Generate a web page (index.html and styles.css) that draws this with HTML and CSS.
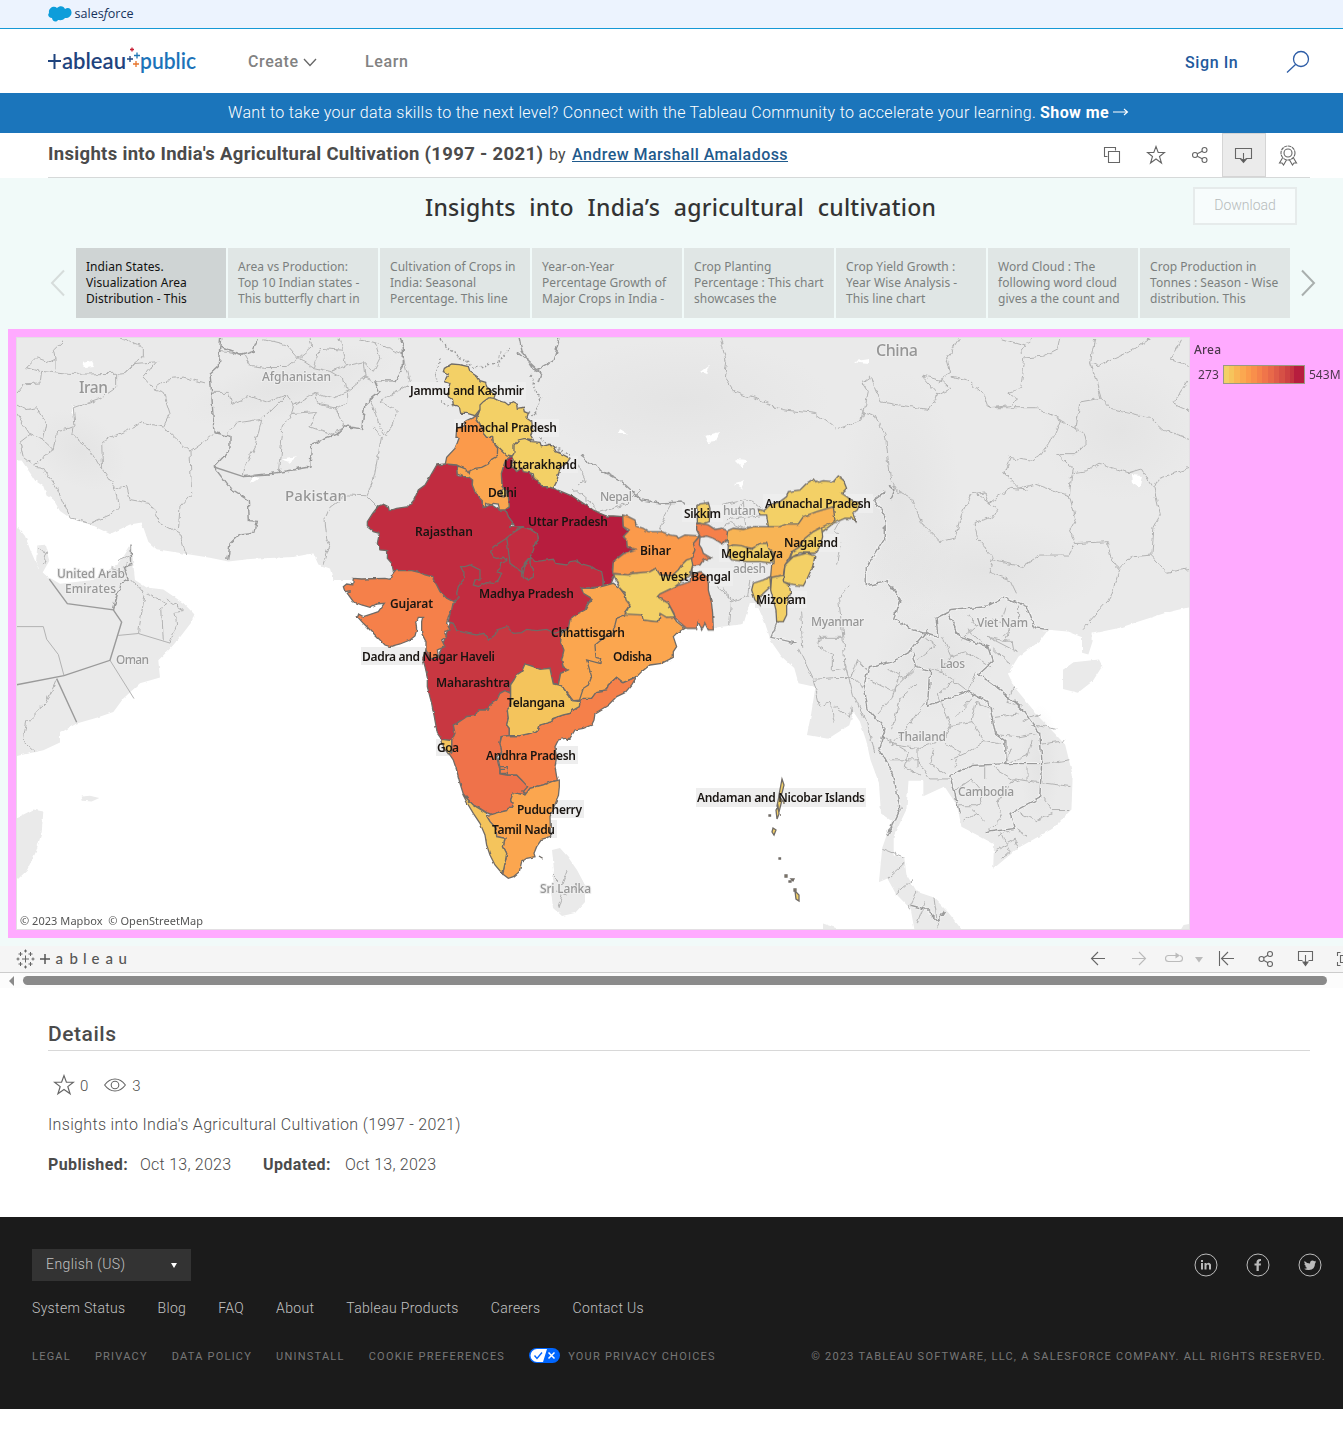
FILE: index.html
```html
<!DOCTYPE html>
<html lang="en">
<head>
<meta charset="utf-8">
<title>Insights into India's Agricultural Cultivation (1997 - 2021)</title>
<link rel="stylesheet" href="styles.css">
</head>
<body>
<div class="topbar">
  <svg width="88" height="20" viewBox="0 0 88 20"><path d="M1 8C0 3 6 0 9 3C12 0 16 1 17 4C21 1 25 5 23 10C21 13 19 13 17 13C15 16 11 15 10 15C8 18 4 16 4 13C1 13-1 10 1 8Z" fill="#0d9dda"/><text x="26.5" y="12.5" class="sf" textLength="59" lengthAdjust="spacingAndGlyphs">sales<tspan font-style="italic">f</tspan>orce</text></svg>
</div>
<header class="header">
  <svg class="logo" width="160" height="34" viewBox="48 44 160 34">
    <path d="M48 61H61M54.5 54V69" stroke="#1f447e" stroke-width="2" fill="none"/>
    <text class="brand navy" x="62" y="69" textLength="64" lengthAdjust="spacingAndGlyphs">ableau</text>
    <text class="brand blue" x="140" y="69" textLength="56" lengthAdjust="spacingAndGlyphs">public</text>
    <path d="M127 59H133M130 56V62" stroke="#1f447e" stroke-width="1.3"/><path d="M130 49.500H134M132 47.500V51.500" stroke="#c72035" stroke-width="1.3"/><path d="M134 55.500H140M137 52.500V58.500" stroke="#1f77b4" stroke-width="1.3"/><path d="M133 64H139M136 61V67" stroke="#e8762c" stroke-width="1.3"/>
  </svg>
  <span class="nav create">Create</span>
  <svg class="chev" width="14" height="9" viewBox="0 0 14 9"><path d="M1 1L7 7.500L13 1" fill="none" stroke="#666" stroke-width="1.3"/></svg>
  <span class="nav learn">Learn</span>
  <span class="signin">Sign In</span>
  <svg class="search" width="24" height="24" viewBox="0 0 24 24"><circle cx="15" cy="9" r="7.500" fill="none" stroke="#2c5ca6" stroke-width="1.3"/><path d="M9.500 14.500L1 22.500" stroke="#2c5ca6" stroke-width="1.3"/></svg>
</header>
<div class="banner"><span>Want to take your data skills to the next level? Connect with the Tableau Community to accelerate your learning.</span><b>Show me</b><svg width="16" height="10" viewBox="0 0 16 10"><path d="M0 5H14.500M11 2L14.500 5L11 8" fill="none" stroke="#fff" stroke-width="1.1"/></svg></div>
<div class="titlebar">
  <h1>Insights into India's Agricultural Cultivation (1997 - 2021)</h1><span class="by">by</span><a class="author">Andrew Marshall Amaladoss</a>
  <div class="actions">
    <span class="act"><svg width="18" height="18" viewBox="0 0 18 18"><path d="M4.500 10.500H1.500V1.500H12.500V4.500M5.500 5.500H16.500V16.500H5.500Z"/></svg></span>
    <span class="act"><svg width="20" height="20" viewBox="0 0 20 20"><path d="M10 1.500L12.200 7.500H18.500L13.500 11.500L15.500 18L10 14L4.500 18L6.500 11.500L1.500 7.500H7.800Z"/></svg></span>
    <span class="act"><svg width="18" height="18" viewBox="0 0 18 18"><circle cx="4" cy="9" r="2.500"/><circle cx="13.500" cy="4" r="2.500"/><circle cx="13.500" cy="14" r="2.500"/><path d="M6.300 7.800L11.200 5.200M6.300 10.200L11.200 12.800"/></svg></span>
    <span class="act on"><svg width="20" height="18" viewBox="0 0 20 18"><path d="M7.500 12.500H1.500V2.500H17.500V12.500H11.500M9.500 7V15"/><path class="solid" d="M7 13.500H12L9.500 16.500Z"/></svg></span>
    <span class="act"><svg width="20" height="22" viewBox="0 0 20 22"><circle cx="10" cy="9" r="4"/><circle cx="10" cy="9" r="7" stroke-dasharray="3.500 .6"/><path d="M4.500 14L1.500 19H4L5.500 21L8.500 16M15.500 14L18.500 19H16L14.500 21L11.500 16"/></svg></span>
  </div>
</div>
<section class="viz">
  <div class="vizhead"><h2>Insights into India’s agricultural cultivation</h2><span class="download">Download</span></div>
  <div class="story">
    <svg class="arrow" width="16" height="28" viewBox="0 0 16 28"><path d="M14 1.500L2 14L14 26.500" fill="none" stroke="#d6dcdb" stroke-width="2"/></svg>
    <div class="tabs">
      <div class="tab sel">Indian States.<br>Visualization Area<br>Distribution - This</div>
      <div class="tab">Area vs Production:<br>Top 10 Indian states -<br>This butterfly chart in</div>
      <div class="tab">Cultivation of Crops in<br>India: Seasonal<br>Percentage. This line</div>
      <div class="tab">Year-on-Year<br>Percentage Growth of<br>Major Crops in India -</div>
      <div class="tab">Crop Planting<br>Percentage : This chart<br>showcases the</div>
      <div class="tab">Crop Yield Growth :<br>Year Wise Analysis -<br>This line chart</div>
      <div class="tab">Word Cloud : The<br>following word cloud<br>gives a the count and</div>
      <div class="tab">Crop Production in<br>Tonnes : Season - Wise<br>distribution. This</div>
    </div>
    <svg class="arrow" width="16" height="28" viewBox="0 0 16 28"><path d="M2 1.500L14 14L2 26.500" fill="none" stroke="#a9afae" stroke-width="2"/></svg>
  </div>
  <div class="dash">
    <svg class="map" width="1174" height="593" viewBox="16 337 1174 593">
      <defs>
        <filter id="rough" x="0" y="0" width="1200" height="950" filterUnits="userSpaceOnUse" color-interpolation-filters="sRGB"><feTurbulence type="fractalNoise" baseFrequency=".14" numOctaves="2" seed="4"/><feDisplacementMap in="SourceGraphic" scale="6" xChannelSelector="R" yChannelSelector="G"/></filter>
        <filter id="fine" x="0" y="0" width="1200" height="950" filterUnits="userSpaceOnUse" color-interpolation-filters="sRGB"><feTurbulence type="fractalNoise" baseFrequency=".2" numOctaves="1" seed="7"/><feDisplacementMap in="SourceGraphic" scale="3" xChannelSelector="R" yChannelSelector="G"/></filter>
        <radialGradient id="relief"><stop offset="0" stop-color="#dedede" stop-opacity=".5"/><stop offset="1" stop-color="#dedede" stop-opacity="0"/></radialGradient>
      </defs>
      <rect x="16" y="337" width="1174" height="593" fill="#fff"/>
      <g filter="url(#fine)">
        <g class="land" transform="translate(10 335) scale(.3333 .3827)">
          <path d="M0 0H1320V640H1130L1030 640L970 640L960 610L925 600L910 570L850 580L720 585L655 592L600 582L530 572L440 560L415 540L395 490L360 495L300 520L240 495L180 478L150 460L130 430L110 420L100 395L75 380L60 360L35 328H0Z"/>
          <path d="M0 490L20 500L45 525L60 560L85 610L110 630L150 650L250 640L320 600L340 580L365 545L370 600L375 640L410 660L460 665L520 700L553 730L545 750L510 790L480 820L445 850L450 895L390 910L340 950L310 985L260 1000L200 1015L150 1040V1065L100 1085L20 1100L0 1105ZM0 1266L20 1262L70 1240L100 1245L95 1300L78 1350L50 1400L20 1425L0 1430ZM215 1206L240 1204L268 1210L245 1219L218 1217ZM82 550L105 548L118 590L95 625L78 595Z"/>
        </g>
        <g class="land" transform="translate(680 335) scale(.4232 .3827)">
          <path d="M-600 0H1215V708L1150 725L1080 750L1040 765L975 780V800L965 835L950 830V790L915 775L870 770L850 800L800 840L775 885L790 920L850 1000L910 1070L928 1150L925 1240L880 1290L800 1340L740 1395L742 1330L700 1305L665 1285L655 1230L625 1180L575 1205V1165L540 1165L535 1240L505 1310V1360L530 1365L535 1410L560 1455L600 1470L635 1510L670 1560H555L545 1500L510 1460L490 1420L470 1430L478 1340L500 1270L475 1250L470 1170L450 1110L440 1060L425 1010L410 985L400 1020L350 1055L300 1045L310 990L320 920L280 910L270 870L240 840L215 800L200 750L180 700L165 700L150 755L80 765L-300 600H-600ZM905 875L930 855L990 848L998 865L975 905L940 935L905 925ZM338 1560V1538L370 1550V1560ZM1180 1560L1190 1542L1210 1538V1560Z"/>
        </g>
        <path class="lnd" d="M552 850L560 848L568 857L577 870L585 885V902L575 913L562 916L553 908L551 890L554 870Z"/>
      </g>
      <g fill="url(#relief)"><ellipse cx="80" cy="450" rx="50" ry="35" transform="rotate(35 80 450)"/><ellipse cx="290" cy="385" rx="110" ry="30" transform="rotate(-15 290 385)"/><ellipse cx="680" cy="400" rx="150" ry="60"/><ellipse cx="900" cy="500" rx="60" ry="130"/><ellipse cx="1120" cy="430" rx="80" ry="70"/><ellipse cx="985" cy="570" rx="120" ry="50"/><ellipse cx="935" cy="660" rx="60" ry="60"/><ellipse cx="1040" cy="765" rx="20" ry="60"/></g>
      <g fill="#fff" filter="url(#rough)"><path d="M82 363L92 361L95 367L85 368ZM253 475L258 478L250 483ZM281 460L298 457L290 463ZM705 436L719 432L715 441L708 442ZM734 459L748 460L742 467ZM855 361L869 359V364L858 363ZM1132 475L1142 476L1140 487L1133 483ZM701 372L709 366L706 374ZM620 429L628 434L618 434ZM71 410L74 405L73 416ZM734 484L745 481L741 488Z"/></g>
      <g filter="url(#rough)" fill="none">
        <g class="minor" transform="translate(10 335) scale(.3333 .3827)">
          <path d="M20 150L40 130L90 128L95 95L180 103L320 100L345 98L400 55V30L330 8M90 95L50 85L80 60L110 70L135 60L130 40L160 15M135 60V90M320 100V135L270 165L190 190L195 240L140 250L130 300L100 320L70 340L40 320L30 280L60 260L100 275L130 300M20 180L50 195L80 190L110 230L100 275M20 205L60 260M345 98L370 75L440 70L400 110L430 140L460 150L480 205L460 240L395 228L350 250L275 280L278 355L240 300L185 260L190 240M278 355L315 400L325 450L300 470L240 492L180 478L140 400L100 350L70 345M315 400L350 395L360 430L420 440L450 490L510 520L527 572M430 140L470 115L520 110L585 125M460 240L540 303L545 415L510 450L505 510M540 303L610 260"/>
          <path d="M600 150L655 150L665 180L720 160L770 175L830 155L850 185L845 205L820 235L805 360M655 260L680 230L755 220L830 155M755 220L735 290L705 340L700 370M845 205L920 200L900 240L965 260L1005 240L975 190L920 180L915 150L850 185M630 40L700 50L720 80L770 85L830 85L865 60L830 25L760 10M865 60L910 85L960 95L1000 115L1010 150L970 165L915 150M865 60L905 30L900 8M910 85L930 35L1000 40L990 10M1000 40L1010 80L960 95M1010 80L1060 70L1090 95L1110 60L1095 20L1180 50M1060 70L1065 110L1010 150L1010 180L975 190M1065 110L1090 120M1095 20L1050 10M1180 60L1200 130L1110 170L1165 200L1130 265L1110 240L1090 190L1080 170M1090 240L1115 265L1090 380L1070 420L1010 418L960 450L945 480L950 530L960 550L940 600M1070 420L1105 450"/>
          <path d="M140 900L110 960L50 1010L40 1060L75 1088M385 780L400 700L405 680L365 640M460 800L455 710L470 700L410 675M480 805L500 755L495 725L520 720L470 690M300 605L340 625L350 590M325 590L365 575M85 560L110 570L100 600"/>
        </g>
        <g class="major" transform="translate(10 335) scale(.3333 .3827)"><path d="M632 8L625 80L600 100L605 150L612 255L660 265L660 300L612 345M700 370L800 360L900 345L905 285L980 260L1005 240L1055 245L1065 180L1110 150L1095 120L1155 120L1180 85V30L1170 8M632 30L695 50L730 40L745 8M612 345L660 400L715 430L718 485L742 487L735 515L690 520L660 545L653 590M310 718L330 650L355 640L340 605L365 600L363 545"/></g>
        <g class="minor" transform="translate(680 335) scale(.4232 .3827)">
          <path d="M95 8L110 70L105 110L130 150L190 170L240 195L320 205L370 245L430 225L445 150L430 125L450 110L475 175L530 185L590 195L610 155L570 105L620 120L640 140L605 160M660 8L630 60L640 100L610 120M640 110L680 120L720 160L730 190L780 185L800 170L775 150L805 140L815 60L860 55L895 35L900 8M730 190L840 190L900 220L885 260L850 315L830 330L780 320L765 360L800 400L840 390L920 420L925 370L930 350L890 310L935 310L960 280L955 255L885 215M430 200L460 210L485 260L498 380L515 410L550 430L570 490L615 540L650 530L665 470L690 415L720 410L730 440L780 400L820 405M700 415L750 455L740 475L695 490L700 530L740 580L730 620L780 640L795 675M740 590L810 605L850 575L920 575L935 545L920 510L935 480L920 420M935 545L1010 540L1020 590L1040 610L1015 690L950 770M1040 610L1065 580L1115 575L1120 500L1135 470L1120 400L1090 350L1060 360L990 335L960 355L930 360M1115 575L1150 620L1205 610M1120 400L1130 375L1205 348M820 30L760 10M805 45L830 8M935 250L945 175L995 165L970 70L990 80L1060 45L1110 8M995 165L1020 195L1110 215L1145 250L1205 270M970 70L980 8M1205 200L1165 180L1200 120M1205 80L1160 65L1185 10M460 430L440 440M370 600L380 540L365 510L375 490"/>
          <path d="M290 820L285 720M280 820L315 900L365 895L405 895L430 920M325 790L385 790L390 870L360 875V835L325 815L330 785M385 790L375 690L400 655M315 900L330 970L355 960L365 1015M365 970L400 1000L405 970M405 895L420 850L445 880M390 860L410 940L440 1010L460 1090M100 660L120 690L115 755M115 700L160 680L165 640M90 660L120 690M100 505L120 490L150 505L180 500M110 480L190 470M125 465L150 440L155 500M100 445L160 430L195 455"/>
          <path d="M580 790L605 810L560 850M620 790L640 840L615 880M640 840L680 830L735 870M660 800L700 760L680 730M700 760L740 745L780 760L770 800L730 790M770 710L760 750M800 710L800 750L760 790M730 790L800 830M760 800L785 800L790 830M740 820L780 860M680 770L720 810M590 870L620 880L680 930M650 900L610 940M700 880L680 930M560 860L530 900L490 870M445 900L500 930L560 870M520 880L500 950L460 1000M560 910L520 950L500 1030M585 950L540 1020L500 1070M610 940L640 1020L620 1060L560 1080L500 1070M640 1020L690 1010L700 960L740 980M690 950L650 1000M690 1010L720 1060L680 1090L640 1110M620 1060L660 1090L650 1130M720 1060L760 1070M740 1000L800 990M755 1045L800 1050L850 1040M780 1080L770 1120L820 1100L830 1060M480 1050L540 1090L530 1130L570 1150M500 1110L560 1110L590 1160L640 1160M560 1080V1130M600 1080L590 1120L630 1150"/>
          <path d="M790 920L770 960L810 970M810 1010L850 990M840 1020L890 1030M850 1070L910 1060M860 1120L920 1110M855 1170L925 1180M860 1210L880 1240L920 1240M790 1240L840 1270L880 1250M720 1300L760 1260L750 1220L790 1160L850 1170M650 1190L690 1160L720 1200L700 1230L660 1230M720 1120V1160M740 1130L800 1170M750 1310L790 1290L820 1310M740 1350L790 1320L800 1340M760 1300L780 1350L760 1370M690 1240L720 1270M670 1270L700 1250M820 1130V1165M475 1340L530 1365M490 1420L530 1380M510 1460L550 1420M560 1455L540 1500M580 1480L560 1540M600 1470L610 1550"/>
        </g>
        <g class="halo" transform="translate(680 335) scale(.4232 .3827)"><path id="sea" d="M485 410L460 430L485 480V530L440 610L440 655L490 645L520 690L505 740L550 770L610 790L605 740L640 720L720 710L765 685L820 710L840 765L870 770M585 770L540 830L500 855L445 870L435 920L445 980L485 1030L470 1080L505 1150L520 1240L490 1310M635 730L660 790L730 815L740 850L705 885L760 930L810 980L850 1040L855 1110L850 1210L780 1250L790 1290L720 1300M550 830L560 870L590 875L585 970L680 930L730 960L745 1040L770 1060V1120L850 1120M770 1120L690 1125L640 1150L660 1250M545 1490L580 1500L610 1530L625 1505M230 750L215 790L275 805"/></g>
        <g class="major" transform="translate(680 335) scale(.4232 .3827)"><use href="#sea"/></g>
        <g class="minor"><path d="M497 368L500 351M552 875L562 885L568 870M555 890L567 895L577 885M562 895L558 908M640 490L625 505L600 512M672 500L660 530M705 500L710 520M575 460L585 480L578 485M600 512L572 487"/></g>
        <g class="major"><path d="M517 351L541 373L538 382M519 337L522 351L535 371L553 361L560 337M580 455L600 470L620 480L642 500L660 503L683 502L692 512M888 484L895 490L890 500"/><path stroke-dasharray="2 2" d="M440 338L450 350L475 368L500 362L510 347M440 358L436 375L440 400L455 408M530 375L540 400L535 415L527 412M533 430L547 445L570 455"/></g>
      </g>
      <g fill="none" transform="translate(10 335) scale(.3333 .3827)">
        <g class="minor"><path d="M20 762L100 762L110 795L145 835L162 890M300 850L372 950M325 785L385 780L480 805"/></g>
        <g class="major"><path d="M612 345L700 370L780 366M118 638L172 702L310 718L335 750L300 850L162 890L20 914M140 898L200 1012"/></g>
      </g>
      <g class="place">
        <text x="79" y="393" font-size="15.500" textLength="29">Iran</text><text x="262" y="381" textLength="69">Afghanistan</text><text x="285" y="501" font-size="15" textLength="62">Pakistan</text><text x="57" y="578" textLength="68">United Arab</text><text x="65" y="593" textLength="51">Emirates</text><text x="116" y="664" textLength="33">Oman</text><text x="876" y="356" font-size="16" textLength="42">China</text><text x="600" y="501" textLength="32">Nepal</text><text x="723" y="515" textLength="33">hutan</text><text x="733" y="573" textLength="33">adesh</text><text x="811" y="626" textLength="53">Myanmar</text><text x="977" y="627" textLength="51">Viet Nam</text><text x="940" y="668" textLength="25">Laos</text><text x="898" y="741" textLength="48">Thailand</text><text x="958" y="796" textLength="56">Cambodia</text><text x="540" y="893" textLength="51">Sri Lanka</text>
      </g>
      <path class="box" d="M409 382H526V400H409ZM454 419H559V437H454ZM503 456H578V473H503ZM361 647H497V665H361ZM436 739H462V756H436ZM485 746H578V764H485ZM516 800H584V818H516ZM491 820H557V838H491ZM659 568H733V586H659ZM682 505H723V522H682ZM763 494H873V513H763ZM782 534H840V552H782ZM719 545H785V562H719ZM755 591H807V608H755ZM696 788H866V807H696Z"/>
      <g class="states" filter="url(#fine)">
        <g transform="translate(340 570) scale(.3333)">
          <path fill="#c83741" d="M258 240L295 262L330 160L360 100H660L665 190L662 215L672 240L665 270L670 290L685 300L662 310L655 340L640 342L635 320L630 295L600 298L580 290L555 282L545 305L530 315L522 330L510 345L512 368L495 362L480 370L470 390L450 405L445 420L415 420L405 437L380 440L350 460L340 465L345 490L335 512L305 508L292 490L283 440L275 400L262 350V320L255 290L248 265Z"/>
        </g>
        <g transform="translate(340 350) scale(.3333)">
          <path fill="#c22c40" d="M505 535L545 530L592 552L785 600L790 710L725 715L730 728L755 745L740 765L735 785L715 800L690 820L685 835L645 850L620 838L590 842L560 838L545 848L520 850L500 830L470 840L465 855L445 870L432 850L410 855L385 850L350 842L340 820L325 815L335 770L345 755L340 700L360 600Z"/>
          <path fill="#b71d3e" d="M512 320L497 330L484 370L486 410L505 440L508 470L497 480L505 500L520 520L525 533L545 530L570 538L592 552L595 565L585 580L578 600L560 618L553 640L545 655L550 680L565 690L580 680V655L570 640V620L585 635L605 632L640 628L648 640L680 645L690 635L710 632L720 640L755 650L770 660L785 665L790 690V705H812L825 670L817 660L820 635L850 610L885 598L862 590L860 570L850 560L865 545L850 530L848 500L820 498H800L780 490L760 480L730 460L700 440L665 425L640 415L605 405L550 350Z"/>
          <path fill="#c22c40" d="M505 532L525 533L545 530L570 538L592 552L595 565L585 580L578 610L553 640V655L550 670L510 640L500 560L505 535ZM558 640L545 655L550 680L565 690L580 680V655L570 640V620Z"/>
          <path fill="#c12c40" d="M290 345L316 342L350 345L352 378L370 380L385 378L397 390V405L405 425L415 440L427 452V472L437 470L455 465L478 480L497 478L505 500L520 520L508 532L548 530L520 548L495 568L460 590L452 605L460 622L470 625L490 622L500 632L482 638L480 655L470 665L485 670L475 690L460 700L440 698L415 710L400 705L405 690L420 690V660L400 650L390 645L375 650L362 650L372 670L370 690L355 710L350 730L355 745L340 755L320 745L300 725L285 700L275 680L255 675L240 668L215 662H160L155 640L142 625L143 602L120 600L112 580L118 550L100 545L82 530V515L98 490L115 468L130 463L145 470L148 483L170 475L205 470L222 450L235 420L255 405L270 380Z"/>
          <path fill="#fba64f" d="M473 290L490 300L512 320L497 330L490 350L484 370L486 410L500 420L505 440L508 470L495 480H478L475 462L460 460L455 465L437 460V472L427 470V452L415 440L405 425L397 405L398 390L385 380H370L352 372L350 350L390 350Z"/>
          <path fill="#f3d066" d="M480 422L492 416L500 425L497 438L484 437Z"/>
          <path fill="#fb9a4b" d="M417 188L412 197L410 208L428 235L430 250L440 262H458L465 285L473 295L472 318L455 328L445 342L425 352L405 355L390 362L388 370L380 358L365 352L350 345L316 342L320 322L345 295L352 278L358 262H348L350 235L372 228L378 212L405 200Z"/>
          <path fill="#f3d066" d="M447 143L462 145L475 152L495 157L505 165L520 155L530 160L532 175L550 172L553 185L565 190L560 205L575 215L578 240L572 255L580 270L555 265L535 270L522 285V310L517 318L500 315L485 300L475 290L460 275L458 262H440L430 250L428 235L410 205L420 180V165L430 155ZM313 55L335 42L358 44L385 50L390 65L412 80L420 92L437 97L440 110L452 120L465 135L462 145L447 143L430 155L420 165V178L405 197L382 190H362L358 170L340 165L338 150L325 140L322 128L330 100L315 95L318 85L325 72L310 65ZM522 285L535 270L555 265L575 275L600 277L605 290L630 283L640 290L648 305L665 312L690 325L680 340L660 355L655 375L650 395L640 415L625 410H605L600 400L582 385L580 372L568 368L550 365L545 355L530 365L515 345L520 330L515 320L522 310Z"/>
        </g>
        <g transform="translate(340 570) scale(.3333)">
          <path fill="#f5804a" d="M40 25L65 27L135 25L150 28L155 15L165 2H215L240 8L255 15L275 20L290 45L300 65L320 85L340 95L335 120L325 140L320 160L330 180L312 185L320 200L305 210L315 230L292 240L295 262L270 262L258 240V215L245 190V155L248 142H235L228 160L230 180L225 198L210 210L180 222L150 230L135 225L100 190L70 160L52 140L55 132L70 140L100 130L115 125L133 100L110 102L90 112L65 105L40 95L22 70L32 62L15 65L10 50L20 42L38 45Z"/>
          <path fill="#fba64f" d="M725 55H760L790 48L820 40L840 55L855 75L870 105L855 125L905 133L910 150L955 155L960 130L1000 140L1010 155L1035 175L1010 190L1000 200L1010 230L1000 245V262L965 280L930 285L905 305L890 320L850 338L830 322L805 345L800 360L770 365L755 385L730 390L700 392L690 380L670 355L655 345L662 310L685 300L670 290L665 270L672 240L662 215L665 190L685 175L690 150L715 130L735 120L755 85L730 70Z"/>
          <path fill="none" d="M855 135L830 145L825 165L815 195L790 205L765 225L768 262L782 265L780 280L740 270L755 320L745 345L730 355L718 392"/>
          <path fill="#ef724a" d="M340 465L350 460L380 440L405 437L415 420H445L450 405L470 390L480 370L495 362L512 370L510 410L502 420L505 445L500 465L508 475V497L483 500L480 520L488 545L470 560L478 595L510 590L500 615H530L545 630L560 640L563 655L550 665L555 675L520 668L512 690L520 712H505L500 722L475 728L460 735L440 728L420 715L400 705L385 690L370 672L360 640L350 600L340 570L325 548L335 545V512L345 490Z"/>
          <path fill="#f5804a" d="M485 500L508 497H540L570 490L595 480L600 465L635 455L640 445L670 435L690 430L700 420L718 410L720 395L730 385H755L770 365L800 360L805 345L830 322L850 338L890 320L875 345L855 368L830 380L805 405L765 430L762 450L755 465L730 475L705 480L690 505H675L655 510L645 530L650 560L645 590L652 632L635 635L610 645L570 655L560 672L550 665L563 650L545 630L530 615H500L480 612V592L475 570L485 545L480 520Z"/>
          <path fill="none" d="M478 590H502V610H480V598H495"/>
          <path fill="#f4c45c" d="M555 282L580 290L600 298L630 295L635 320L640 342L655 345L670 355L690 380L695 392L720 395L718 410L700 420L690 430L670 435L640 445L635 455L600 465L595 480L570 490L540 497H508V475L500 465L505 445L502 420L512 405V345L522 330L530 315L545 305ZM305 508L335 512V545L325 552L312 535Z"/>
          <path fill="#fba64f" d="M440 738L475 728L500 722L505 712H520L512 690L520 668L555 675L570 655L610 645L635 635L658 630V650L655 680L640 715L630 740L632 800L605 808L590 830L582 850L585 860L560 865L545 875L538 905L520 920L505 925L488 912L495 880L500 850L490 830L495 805L470 800L468 775L450 755Z"/>
          <path fill="#f4c45c" d="M368 672L385 690L400 705L440 730V738L450 755L468 775L470 800L495 805L490 830L500 850L495 880L488 912L465 885L450 855L440 825L435 795L420 760L400 730L385 705Z"/>
          <path d="M597 858L608 865M680 508H692"/>
        </g>
        <g transform="translate(600 450) scale(.3333)">
          <path fill="#fb9a4b" d="M68 195L85 200L105 210L108 228L130 235L145 245H185L210 255L230 258L235 265L255 255L298 258L285 275L288 295L280 310L272 330H260L245 345L235 360L215 378L180 375L168 355L150 365L120 375L100 370L85 375L38 370L40 335L70 312L105 298L82 292L80 270L70 260L88 240L70 230Z"/>
          <path fill="#f5804a" d="M290 220L310 222L325 225L345 238L365 235L383 242L382 265L368 282L340 265L320 258L300 262L298 285L305 295L310 310L335 325L310 330L300 345L275 350L278 375L300 365L320 380L325 400V420L335 460L338 490L340 540H325L315 520L305 540L295 515L290 535H260L225 505L222 490L205 460L172 440L180 430L225 410L270 395L278 345L272 330L285 300L280 280L300 258L290 240Z"/>
          <path fill="#f3d066" d="M40 372L85 375L100 370L150 365L168 355L180 375L215 378L235 360L245 345L260 330L275 325L278 345L270 375L245 395L225 410L180 432L172 440L205 460L225 500L200 502L180 490L178 510L170 515L130 510L125 495L75 492L90 465L78 450L75 430L60 415ZM290 170L300 162L325 158L330 175L328 215L310 222L292 218V195ZM475 178L492 182L510 165L540 155L560 140L565 125L600 120L620 100L640 87L650 98L670 92L700 95L715 78L730 90L740 115L725 130L740 140L760 155L780 160L772 180L758 190L770 217L755 205H735L700 220L668 245L640 250L505 230L500 195L480 195Z"/>
          <path fill="#f8b455" d="M383 242L400 235L430 238L460 230H505L540 230L560 222H595L610 200L650 185L700 170L705 212L665 232L640 250L620 262L600 290L575 305L570 320L555 345L550 375L530 390L512 380L515 345L522 335L508 315L490 285L455 295L400 285L385 290L380 265Z"/>
          <path fill="#f3d066" d="M385 292L400 285L425 287L455 298L480 280H500L505 295L522 310V340L480 335H440L395 330L382 315ZM665 232L668 260L660 290L645 310L600 308L570 325L578 305L600 290L615 265L640 245ZM580 320L620 310L645 318L638 350L622 385L610 408L570 402L550 395L555 345ZM515 382L550 375V395L568 405L572 430L560 460V495L550 515H530L528 480L520 450L512 420ZM510 380L512 410L490 430L475 445L480 465L465 450L455 420L460 400L490 390Z"/>
        </g>
      </g>
      <g class="states"><path fill="#f3d066" d="M782 779L784 785L782 793L779 795ZM779 796L782 800L779 812L777 806ZM778 806L779 814L777 819L776 810ZM773 828L776 830L774 835L772 832ZM795 891L799 895L799 901L796 899ZM779 858H780.500V859H779ZM785 875H787V877H785ZM791 879H794L793 881ZM789 881H791V882H789ZM794 889H796V891H794ZM782 801H784V804M780 815H781M769 815H770.500V816H769Z"/></g>
      <g class="lab">
        <text x="410" y="395" textLength="114">Jammu and Kashmir</text><text x="455" y="432" textLength="102">Himachal Pradesh</text><text x="504" y="469" textLength="73">Uttarakhand</text><text x="488" y="497" textLength="29">Delhi</text><text x="415" y="536" textLength="58">Rajasthan</text><text x="528" y="526" textLength="80">Uttar Pradesh</text><text x="479" y="598" textLength="95">Madhya Pradesh</text><text x="390" y="608" textLength="43">Gujarat</text><text x="362" y="661" textLength="133">Dadra and Nagar Haveli</text><text x="436" y="687" textLength="74">Maharashtra</text><text x="507" y="707" textLength="58">Telangana</text><text x="437" y="752" textLength="22">Goa</text><text x="486" y="760" textLength="90">Andhra Pradesh</text><text x="517" y="814" textLength="65">Puducherry</text><text x="492" y="834" textLength="63">Tamil Nadu</text><text x="551" y="637" textLength="74">Chhattisgarh</text><text x="613" y="661" textLength="39">Odisha</text><text x="640" y="555" textLength="31">Bihar</text><text x="660" y="581" textLength="71">West Bengal</text><text x="684" y="518" textLength="37">Sikkim</text><text x="765" y="508" textLength="106">Arunachal Pradesh</text><text x="721" y="558" textLength="62">Meghalaya</text><text x="784" y="547" textLength="54">Nagaland</text><text x="756" y="604" textLength="50">Mizoram</text><text x="697" y="802" textLength="168">Andaman and Nicobar Islands</text>
      </g>
      <text class="credit" x="20" y="925" textLength="183">© 2023 Mapbox&#160; © OpenStreetMap</text>
      <rect x="16.500" y="337.500" width="1173" height="592" fill="none" stroke="#e3dfe3"/>
    </svg>
    <aside class="legend"><div class="lt">Area</div><div class="lr"><span>273</span><i class="ramp"></i><span class="max">543M</span></div></aside>
  </div>
  <div class="toolbar">
    <svg width="116" height="22" viewBox="0 -1 116 22"><path d="M6 10H13M9.500 6.500V13.500M8 2H11M9.500 .5V3.500M8 18H11M9.500 16.500V19.500M.5 10H3.500M2 8.500V11.500M15.500 10H18.500M17 8.500V11.500M2.500 5H6.500M4.500 3V7M12.500 5H16.500M14.500 3V7M2.500 15H6.500M4.500 13V17M12.500 15H16.500M14.500 13V17" fill="none" stroke="#666"/><path d="M24 10H34M29 5V15" fill="none" stroke="#555" stroke-width="1.500"/><text class="tword" x="39.500 53.500 67 75.500 89.500 102.500" y="15">ableau</text></svg>
    <svg class="tools" width="253" height="20" viewBox="1090 949 253 20">
      <path d="M1105 958.500H1092M1098 952L1091.500 958.500L1098 965"/><path class="dim" d="M1132 958.500H1145M1139 952L1145.500 958.500L1139 965M1177 955.500H1168.500Q1165.500 955.500 1165.500 958.500Q1165.500 961.500 1168.500 961.500H1179.500Q1182.500 961.500 1182.500 958.500Q1182.500 956 1180 955.500"/><path d="M1175.500 952.500V958.500L1180 955.500ZM1195 957H1203L1199 962.500Z" class="dimfill"/><path d="M1219.500 951V966M1234 958.500H1221.500M1228 952L1221.500 958.500L1228 965"/><circle cx="1261.500" cy="959" r="2.500"/><circle cx="1270" cy="954" r="2.500"/><circle cx="1270" cy="964" r="2.500"/><path d="M1264 957.500L1268 955.300M1264 960.500L1268 962.700M1302.500 960.500H1298.500V951.500H1312.500V960.500H1308.500M1305.500 955V963M1340.500 952.500H1337.500V956M1337.500 962V965.500H1340.500M1344 955.500H1340.500V962.500H1344"/><path class="solid" d="M1303 962H1308L1305.500 965.500Z"/>
    </svg>
  </div>
  <div class="scroll"><i class="tri"></i><i class="thumb"></i></div>
</section>
<section class="details">
  <h3>Details</h3>
  <div class="stats"><svg width="22" height="22" viewBox="0 0 20 20"><path d="M10 1.500L12.200 7.500H18.500L13.500 11.500L15.500 18L10 14L4.500 18L6.500 11.500L1.500 7.500H7.800Z"/></svg><span>0</span><svg class="eye" width="22" height="14" viewBox="0 0 22 14"><path d="M.6 7Q5 1 11 1T21.400 7Q17 13 11 13T.6 7Z"/><circle cx="11" cy="7" r="3.800"/></svg><span>3</span></div>
  <p class="desc">Insights into India's Agricultural Cultivation (1997 - 2021)</p>
  <p class="dates"><b>Published:</b><span>Oct 13, 2023</span><b class="upd">Updated:</b><span>Oct 13, 2023</span></p>
</section>
<footer class="footer">
  <div class="frow"><div class="lang"><span>English (US)</span><i></i></div>
    <div class="social">
      <svg width="24" height="24" viewBox="0 0 24 24"><circle cx="12" cy="12" r="11"/><path class="g" d="M7 10H9V16.500H7ZM7 7H9V9H7ZM10.500 10H12.500V11Q15 8.500 17 11.500V16.500H15V12.500Q13.800 10.500 12.500 12.500V16.500H10.500Z"/></svg>
      <svg width="24" height="24" viewBox="0 0 24 24"><circle cx="12" cy="12" r="11"/><path class="g" d="M10.500 18V12.500H8.500V10.500H10.500Q10 5.500 15 6V8Q12.500 7.500 12.800 10.500H15L14.700 12.500H12.800V18Z"/></svg>
      <svg width="24" height="24" viewBox="0 0 24 24"><circle cx="12" cy="12" r="11"/><path class="g" d="M6.500 8Q9 10.500 12 10.500Q12 7.500 14.500 7.500Q15.500 7.500 16.300 8.200L18 7.800L17.200 9.300L18 9.500L17 10.500Q17 16.500 11 17Q8 17.200 6 15.800Q8 16 9.200 15Q7.500 14.500 7.200 13.300L8.200 13.200Q6.300 12.300 6.300 10.800L7.200 11Q5.800 9.500 6.500 8Z"/></svg>
    </div>
  </div>
  <nav class="links"><span>System Status</span><span>Blog</span><span>FAQ</span><span>About</span><span>Tableau Products</span><span>Careers</span><span>Contact Us</span></nav>
  <div class="legal"><span>LEGAL</span><span>PRIVACY</span><span>DATA POLICY</span><span>UNINSTALL</span><span>COOKIE PREFERENCES</span><svg width="31" height="15" viewBox="0 0 31 15"><rect width="31" height="15" rx="7.500" fill="#06f"/><path d="M8 1H18L14 14H8A6.500 6.500 0 0 1 8 1Z" fill="#fff"/><path d="M5.500 7.500L8 10.500L13 4.500" fill="none" stroke="#06f" stroke-width="1.400"/><path d="M19.500 4.500L25.500 10.500M25.500 4.500L19.500 10.500" stroke="#fff" stroke-width="1.500"/></svg><span class="ypc">YOUR PRIVACY CHOICES</span><span class="copy">© 2023 TABLEAU SOFTWARE, LLC, A SALESFORCE COMPANY. ALL RIGHTS RESERVED.</span></div>
</footer>
</body>
</html>
```
FILE: styles.css
```css
*{box-sizing:border-box}
body{margin:0;background:#fff;font-family:Roboto,"Liberation Sans",sans-serif;color:#4b4b4b;width:1343px;overflow-x:hidden}
h1,h2,h3,p{margin:0}
svg{display:block;flex:none}
span,b,a,h1,h2{white-space:nowrap}
.topbar{height:29px;background:#ecf3fe;border-bottom:1px solid #1699d6;padding:5px 48px}
.sf{font:500 12px "Open Sans",sans-serif;fill:#16325c}
.header{height:64px;display:flex;align-items:center;padding-left:48px;font-size:16px;font-weight:500;letter-spacing:.6px}
.brand{font:600 23px Lato,sans-serif;letter-spacing:0}
.navy{fill:#1f447e}
.blue{fill:#1c73b9}
.nav{color:#828282}
.create{margin-left:40px;width:51px}
.chev{margin:3px 0 0 4px}
.learn{margin-left:48px}
.signin{margin-left:auto;color:#1f5a9d;width:53px;margin-right:48px;margin-top:2px}
.search{margin-right:33px;margin-top:2px}
.banner{height:40px;background:#1b75bb;color:#fff;display:flex;align-items:center;justify-content:center;padding:0 0 2px 14px;font-size:16px;font-weight:300}
.banner span{width:808px;letter-spacing:.29px}
.banner b{margin:0 4px;font-weight:700;letter-spacing:.4px}
.titlebar{height:45px;margin:0 33px 0 48px;border-bottom:1px solid #d6d9d9;display:flex;align-items:center}
h1{font-size:18.5px;font-weight:700;width:495px;letter-spacing:.33px;padding-bottom:2px}
.by{font-size:16px;margin-left:6px;width:17px;padding-bottom:2px}
.author{font-size:16px;font-weight:500;color:#1f5a8c;text-decoration:underline;margin-left:6px;letter-spacing:.45px;padding-bottom:2px}
.actions{display:flex;margin-left:auto;height:44px}
.act{width:44px;display:flex;align-items:center;justify-content:center}
.act svg,.tools,.stats svg{fill:none;stroke:#666;stroke-width:1.1}
.on{background:#ebebeb;border:1px solid #d5d5d5}
.solid{fill:#555}
.viz{height:810px;background:#f1faf9;font-family:"Noto Sans",sans-serif}
.vizhead{height:70px;display:flex;justify-content:flex-end;padding:9px 46px 0 0}
h2{font-size:23px;font-weight:500;color:#333;width:512px;margin:4px 256px 0 0;line-height:33px;word-spacing:7.5px;letter-spacing:.25px}
.download{width:104px;height:38px;border:2px solid #e6ebeb;background:#f7fcfc;color:#b6bbbb;font:300 14px/33px Roboto,sans-serif;text-align:center}
.story{display:flex;height:70px;padding-left:50px;align-items:center}
.arrow{margin-right:10px}
.tabs{display:flex;gap:2px;margin-right:10px}
.tab{width:150px;height:70px;padding:11px 10px;background:#e0e6e5;color:#7b7f7e;font-size:12px;line-height:16px;white-space:nowrap;letter-spacing:.05px}
.sel{background:#cfd4d4;color:#111}
.dash{margin:11px 0 0 8px;height:609px;background:#ffaaff;padding:8px;display:flex}
.land,.lnd{fill:#eaeaea}
.minor{stroke:#b2b2b2;stroke-width:1}
.major{stroke:#9a9a9a;stroke-width:1.4}
.halo{stroke:#f3f3f3;stroke-width:3}
.minor path,.major path,.halo path,.major use,.states path{vector-effect:non-scaling-stroke}
.place{font-size:12px;font-weight:500;fill:#969696;stroke:#eee;stroke-width:2px;paint-order:stroke}
.box{fill:#eee}
.states{stroke:#706b66;stroke-width:1.3}
.lab{font-size:12px;font-weight:600;fill:#191512}
.credit{font-size:11px;fill:#555}
.legend{width:153px;padding:5px 0 0 4px;font-size:12px;color:#4b374b}
.lt{line-height:16px;font-weight:500;letter-spacing:.2px}
.lr{display:flex;align-items:center;margin-top:7px;padding-left:4px;line-height:18px;letter-spacing:.1px}
.ramp{width:82px;height:19px;margin:0 4px 0 4px;border:1px solid #9a9a84;background:linear-gradient(90deg,#f3d066 0 6%,#f6c45c 6% 13%,#f9b554 13% 20%,#fba850 20% 27%,#fb9b4b 27% 34%,#f98f4b 34% 41%,#f5824a 41% 48%,#f0754a 48% 55%,#e86949 55% 62%,#df5c48 62% 69%,#d65045 69% 76%,#cd4242 76% 82%,#c43441 82% 88%,#b71d3e 88%)}
.toolbar{height:27px;margin-top:8px;background:#f5f5f5;border-bottom:1px solid #ccc;display:flex;justify-content:space-between;align-items:center;padding-left:16px}
.tword{font:500 15px Lato,sans-serif;fill:#555}
.dim{stroke:#bbb}
.dimfill{fill:#bbb;stroke:none}
.scroll{height:15px;background:#fcfcfc;display:flex;align-items:center;padding-left:9px}
.tri{border:5px solid transparent;border-right-color:#8a8a8a;border-left:0}
.thumb{width:1304px;height:9px;margin-left:9px;border-radius:5px;background:#8a8a8a}
.details{height:229px;padding:33px 33px 0 48px}
h3{font-size:21px;font-weight:500;line-height:26px;padding-bottom:3px;border-bottom:1px solid #d8d8d8;letter-spacing:.55px}
.stats{display:flex;align-items:center;height:24px;margin-top:22px;padding-left:5px;font-size:15px;font-weight:300}
.stats span{margin-left:5px;padding-top:1px}
.stats .eye{margin-left:16px}
.stats .eye+span{margin-left:6px}
.desc{font-size:16px;font-weight:300;line-height:24px;margin-top:16px;letter-spacing:.33px}
.dates{display:flex;font-size:16px;font-weight:300;line-height:24px;margin-top:16px;letter-spacing:.25px}
.dates b{font-weight:700;width:80px;margin-right:12px;letter-spacing:.4px}
.dates span{width:91px}
.dates .upd{width:70px;margin-left:32px}
.footer{height:192px;background:#1b1b1b;color:#c2c2c2;padding:32px 18px 0 32px;font-weight:300}
.frow{display:flex;justify-content:space-between}
.lang{width:159px;height:32px;background:#333;display:flex;align-items:center;justify-content:space-between;padding:0 14px 2px 14px;font-size:14px;letter-spacing:.42px}
.lang i{border:3px solid transparent;border-top:5px solid #fff;border-bottom:0;margin-top:2px}
.social{display:flex;gap:28px;margin:4px 3px 0 0}
.social svg{fill:none;stroke:#bbb}
.social .g{fill:#bbb;stroke:none}
.links{display:flex;gap:32px;font-size:14px;line-height:20px;margin-top:17px;letter-spacing:.33px}
.legal{display:flex;align-items:center;font-size:11px;letter-spacing:1.23px;color:#777;margin-top:30px;height:16px;font-weight:400}
.legal span{margin-right:24px}
.legal svg{margin-top:-2px}
.legal .ypc{margin-left:8px}
.legal .copy{margin:0 -1px 0 auto}
```
